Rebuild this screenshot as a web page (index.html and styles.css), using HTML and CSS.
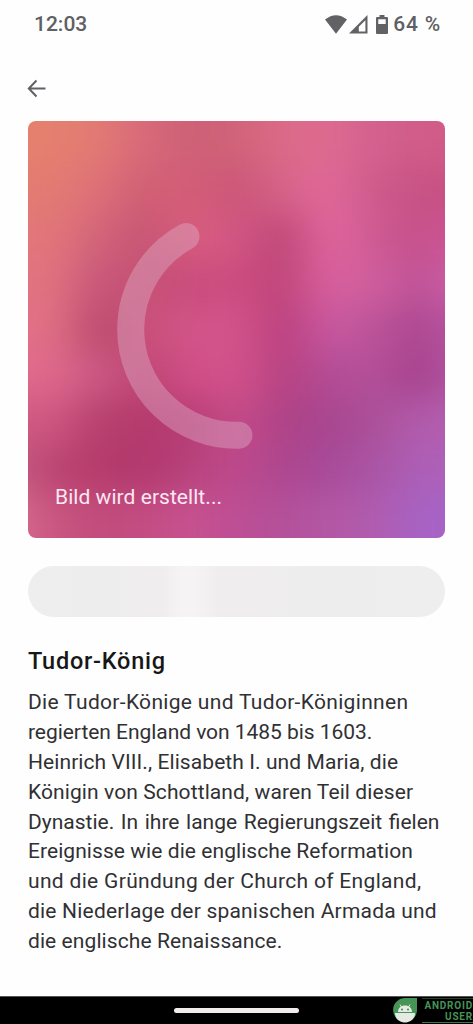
FILE: index.html
```html
<!DOCTYPE html>
<html lang="de">
<head>
<meta charset="utf-8">
<title>Tudor-König</title>
<link rel="stylesheet" href="styles.css">
</head>
<body>
<div class="screen">
  <header class="status">
    <span class="clock">12:03</span>
    <div class="indicators">
      <svg class="wifi" viewBox="0 0 22 19"><path d="M0 4.5Q11-4 22 4.5L11 18.7Z"/></svg>
      <svg class="signal" viewBox="0 0 19 19"><path fill-rule="evenodd" d="M18.5 0V18.5H0ZM16.4 5.2 9.8 11.8V16.5H16.4Z"/></svg>
      <svg class="battery" viewBox="0 0 12 19"><path fill-rule="evenodd" d="M3.500 0h5v2H11q1 0 1 1V18q0 1-1 1H1q-1 0-1-1V3q0-1 1-1H3.500ZM2.300 4.300V9H9.700V4.300Z"/></svg>
      <span class="percent">64 %</span>
    </div>
  </header>
  <nav class="toolbar">
    <svg class="back" viewBox="0 0 20 20"><path d="M18.500 9.500H2M9.500 1.500 1.800 9.500 9.500 17.500"/></svg>
  </nav>
  <main class="content">
    <section class="card">
      <div class="mesh">
        <i class="band b1"></i><i class="band b2"></i><i class="band b3"></i>
        <i class="band b4"></i><i class="band b5"></i><i class="band b6"></i>
        <i class="band b7"></i><i class="band b8"></i><i class="band b9"></i>
      </div>
      <svg class="art" viewBox="0 0 417 417">
        <path class="spinner" d="M158 115.500A105.800 105.800 0 0 0 102.700 208.500A105.800 105.800 0 0 0 211 314.300"/>
      </svg>
      <p class="caption">Bild wird erstellt...</p>
    </section>
    <div class="placeholder"></div>
    <h1 class="title">Tudor-König</h1>
    <p class="body">
      <span class="line l1">Die Tudor-Könige und Tudor-Königinnen</span>
      <span class="line l2">regierten England von 1485 bis 1603.</span>
      <span class="line l3">Heinrich VIII., Elisabeth I. und Maria, die</span>
      <span class="line l4">Königin von Schottland, waren Teil dieser</span>
      <span class="line l5">Dynastie. In ihre lange Regierungszeit fielen</span>
      <span class="line l6">Ereignisse wie die englische Reformation</span>
      <span class="line l7">und die Gründung der Church of England,</span>
      <span class="line l8">die Niederlage der spanischen Armada und</span>
      <span class="line l9">die englische Renaissance.</span>
    </p>
  </main>
  <footer class="navbar">
    <div class="handle"></div>
    <div class="brand">
      <svg class="logo" viewBox="0 0 24 25">
        <path d="M12 0H24V13A12 12 0 1 1 12 0Z" fill="#479457"/>
        <path d="M5 14C5 10 8 7.500 12 7.500S19 10 19 14Z" fill="#e3ebe3"/>
        <path d="M8.500 9 7 6.500M15.500 9 17 6.500" stroke="#e3ebe3" stroke-width="1"/>
        <path d="M2 15H22C22 21 17 24.500 12 24.500S2 21 2 15Z" fill="#e3ebe3"/>
        <circle cx="9" cy="11.500" r=".9" fill="#397846"/><circle cx="15" cy="11.500" r=".9" fill="#397846"/>
      </svg>
      <div class="wordmark"><span>ANDROID</span><span>USER</span></div>
    </div>
  </footer>
</div>
</body>
</html>
```
FILE: styles.css
```css
* { box-sizing: border-box; }
body { margin: 0; background: #fefefe; font-family: Roboto, "Open Sans", sans-serif; }
.screen { width: 473px; height: 1024px; display: flex; flex-direction: column; overflow: hidden; }
.status { height: 48px; padding: 0 32px 0 34px; display: flex; justify-content: space-between; align-items: center; color: #5f6063; font-size: 21px; font-weight: 500; }
.indicators { display: flex; align-items: center; }
.indicators svg { fill: #626264; }
.wifi { width: 22px; height: 19px; margin-right: 2px; }
.signal { width: 19px; height: 19px; margin-right: 8px; }
.battery { width: 12px; height: 19px; margin-right: 5px; }
.percent { letter-spacing: .8px; white-space: nowrap; }
.toolbar { height: 73px; padding: 31px 27px 0; }
.back { display: block; width: 20px; height: 20px; fill: none; stroke: #606164; stroke-width: 2; }
.content { padding: 0 28px; flex: 1; }
.card { width: 417px; height: 417px; border-radius: 8px; overflow: hidden; display: grid; grid-template: 417px / 417px; }
.mesh, .art, .caption { grid-area: 1 / 1; }
/* The outer bands run past the card so that the blur has no pale rim. */
.mesh { width: 537px; height: 537px; margin: -60px; display: grid; grid-template-rows: 106.300px repeat(7, 46.340px) 106.300px; filter: blur(17px); }
.band { display: block; }
.b1 { background: linear-gradient(90deg, #e5806e 83px, #e27a74 130px, #d8697a 176px, #cd6076 222px, #d06378 269px, #dc6a88 315px, #de6b90 361px, #d2608e 408px, #d25c88 454px); }
.b2 { background: linear-gradient(90deg, #e37b72 83px, #de7079 130px, #cf5e74 176px, #d55e78 222px, #c95577 269px, #d76489 315px, #e1689a 361px, #cd5a8b 408px, #c75183 454px); }
.b3 { background: linear-gradient(90deg, #e2767a 83px, #d2647a 130px, #c65474 176px, #d95e7e 222px, #d35684 269px, #bc4676 315px, #e2679e 361px, #cd5a93 408px, #c55089 454px, #cc5595 477px); }
.b4 { background: linear-gradient(90deg, #e1737f 83px, #c6567a 130px, #c75274 176px, #c94c7c 222px, #cd4c80 269px, #be4579 315px, #da619e 361px, #cf5e9d 408px, #bd5196 454px, #cb5da4 477px); }
.b5 { background: linear-gradient(90deg, #e27086 83px, #b94a6e 130px, #ca5078 176px, #d2558a 222px, #d4548a 269px, #ba3f7d 315px, #c959a2 361px, #bb5398 408px, #ab458f 454px, #b653a0 477px); }
.b6 { background: linear-gradient(90deg, #df698c 83px, #cb5984 130px, #be4574 176px, #d14e86 222px, #d2528c 269px, #b74281 315px, #b34c95 361px, #b3509a 408px, #a53f8a 454px, #b153a0 477px); }
.b7 { background: linear-gradient(90deg, #cf5882 83px, #b53f6d 130px, #b53a6c 176px, #b53c74 222px, #c54b88 269px, #ae4286 315px, #a84590 361px, #ac5099 408px, #b25dae 454px); }
.b8 { background: linear-gradient(90deg, #c3567d 60px, #ba4370 83px, #b53b6b 130px, #b1376d 176px, #b8427c 222px, #bd4a8c 269px, #ae468f 315px, #a64a98 361px, #aa55a5 408px, #ad60b8 454px); }
.b9 { background: linear-gradient(90deg, #d4678b 60px, #c95680 83px, #c24c7c 130px, #c34c82 176px, #c7528f 222px, #bd4e94 269px, #b3509a 315px, #b457a4 361px, #b05caf 408px, #a663c6 454px); }
.art { width: 417px; height: 417px; display: block; z-index: 1; }
.spinner { fill: none; stroke: #dfb4cd; stroke-opacity: .4; stroke-width: 27; stroke-linecap: round; }
.caption { margin: 0 0 26px 27px; align-self: end; z-index: 1; font-size: 21px; line-height: 30px; letter-spacing: .05px; color: #fce7f2; }
.placeholder { height: 51px; margin-top: 28px; border-radius: 26px; background: linear-gradient(90deg, #eee 0, #efedee 32%, #f5f3f4 37%, #f5f3f4 40%, #efedee 46%, #eee 100%); }
.title { margin: 29px 0 0; font-size: 23.500px; line-height: 30px; font-weight: 500; letter-spacing: .75px; color: #171717; }
.body { margin: 12px 0 0; font-size: 21px; line-height: 29.870px; color: #303033; }
.line { display: block; width: max-content; white-space: nowrap; }
.l1 { letter-spacing: .32px; }
.l2 { letter-spacing: -.05px; }
.l3 { letter-spacing: .08px; }
.l4 { letter-spacing: .1px; }
.l5 { word-spacing: 1.400px; }
.l6 { letter-spacing: .06px; }
.l7 { letter-spacing: .32px; }
.l8 { letter-spacing: .2px; }
.l9 { letter-spacing: .08px; }
.navbar { height: 28px; background: #000; border-top: 1px solid #555; display: grid; grid-template-columns: 174px 125px 94px 80px; flex: none; }
.handle { grid-column: 2; width: 125px; height: 5px; margin-top: 11px; border-radius: 3px; background: #f1eded; }
.brand { grid-column: 4; display: flex; }
.logo { width: 24px; height: 25px; margin-top: 1px; flex: none; }
.wordmark { width: 51px; margin-left: 5px; margin-top: 1px; height: 25px; border-top: 1px solid #214528; border-bottom: 1px solid #397846; display: flex; flex-direction: column; align-items: flex-end; padding-top: 1px; color: #479457; font: 700 10px/11px Roboto, sans-serif; letter-spacing: .8px; flex: none; }
```
